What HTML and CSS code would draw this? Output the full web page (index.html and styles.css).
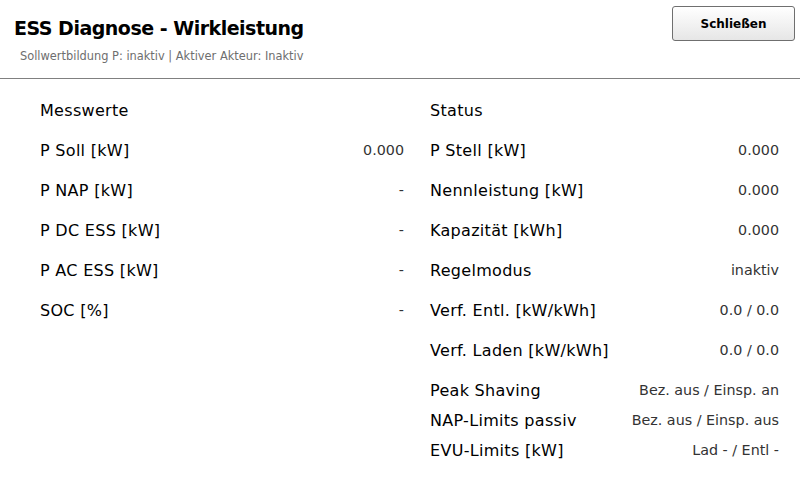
FILE: index.html
```html
<!DOCTYPE html>
<html lang="de">
<head>
<meta charset="utf-8">
<title>ESS Diagnose - Wirkleistung</title>
<link rel="stylesheet" href="styles.css">
</head>
<body>
<div class="screen">
  <header class="header">
    <div class="titles">
      <h1 class="title">ESS Diagnose - Wirkleistung</h1>
      <div class="subtitle">Sollwertbildung P: inaktiv | Aktiver Akteur: Inaktiv</div>
    </div>
    <button class="btn">Schließen</button>
  </header>
  <main class="content">
    <section class="col col-left">
      <div class="row head">Messwerte</div>
      <div class="row"><span class="lbl">P Soll [kW]</span><span class="val">0.000</span></div>
      <div class="row"><span class="lbl">P NAP [kW]</span><span class="val">-</span></div>
      <div class="row"><span class="lbl">P DC ESS [kW]</span><span class="val">-</span></div>
      <div class="row"><span class="lbl">P AC ESS [kW]</span><span class="val">-</span></div>
      <div class="row"><span class="lbl">SOC [%]</span><span class="val">-</span></div>
    </section>
    <section class="col col-right">
      <div class="row head">Status</div>
      <div class="row"><span class="lbl">P Stell [kW]</span><span class="val">0.000</span></div>
      <div class="row"><span class="lbl">Nennleistung [kW]</span><span class="val">0.000</span></div>
      <div class="row"><span class="lbl">Kapazität [kWh]</span><span class="val">0.000</span></div>
      <div class="row"><span class="lbl">Regelmodus</span><span class="val">inaktiv</span></div>
      <div class="row"><span class="lbl">Verf. Entl. [kW/kWh]</span><span class="val">0.0 / 0.0</span></div>
      <div class="row"><span class="lbl">Verf. Laden [kW/kWh]</span><span class="val">0.0 / 0.0</span></div>
      <div class="small-rows">
        <div class="row small"><span class="lbl">Peak Shaving</span><span class="val">Bez. aus / Einsp. an</span></div>
        <div class="row small"><span class="lbl">NAP-Limits passiv</span><span class="val">Bez. aus / Einsp. aus</span></div>
        <div class="row small"><span class="lbl">EVU-Limits [kW]</span><span class="val">Lad - / Entl -</span></div>
      </div>
    </section>
  </main>
</div>
</body>
</html>
```
FILE: styles.css
```css
* { box-sizing: border-box; }
html, body { margin: 0; padding: 0; background: #fff; }
body {
  font-family: "DejaVu Sans", Verdana, sans-serif;
  color: #000;
  width: 800px;
  height: 480px;
  overflow: hidden;
}
.screen { width: 800px; height: 480px; }
.header {
  height: 79px;
  border-bottom: 1px solid #808080;
  display: flex;
  justify-content: space-between;
  align-items: flex-start;
  padding: 6px 5px 0 14px;
}
.titles { padding-top: 10px; }
.title {
  margin: 0;
  font-size: 19px;
  font-weight: bold;
  line-height: 24px;
  letter-spacing: -0.5px;
}
.subtitle {
  margin-top: 9px;
  padding-left: 6px;
  font-size: 11.4px;
  line-height: 14px;
  color: #6e6e6e;
}
.btn {
  width: 123px;
  height: 35px;
  border: 1px solid #6f6f6f;
  border-radius: 3px;
  background: linear-gradient(#ffffff, #e6e6e6);
  font-family: "DejaVu Sans", Verdana, sans-serif;
  font-size: 12px;
  font-weight: bold;
  color: #000;
  padding: 0;
}
.content {
  display: flex;
  padding-top: 11px;
}
.col { display: flex; flex-direction: column; }
.col-left { width: 364px; margin-left: 40px; }
.col-right { width: 349px; margin-left: 26px; }
.row {
  height: 40px;
  display: flex;
  justify-content: space-between;
  align-items: center;
  font-size: 16px;
  letter-spacing: 0.3px;
}
.val { color: #333; font-size: 14.3px; letter-spacing: 0; }
.small-rows { margin-top: 5px; }
.row.small { height: 30px; }
```
